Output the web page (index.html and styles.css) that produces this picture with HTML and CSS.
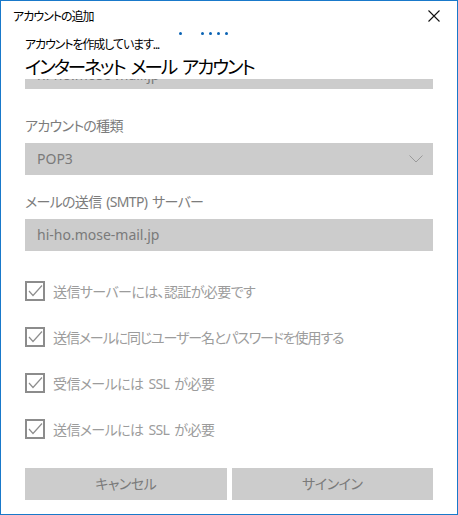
FILE: index.html
```html
<!DOCTYPE html>
<html lang="ja">
<head>
<meta charset="utf-8">
<link rel="stylesheet" href="styles.css">
</head>
<body>
<div class="window">
  <div class="titlebar">
    <span class="title">アカウントの追加</span>
    <svg class="close" width="12" height="12" viewBox="0 0 12 12"><path d="M0.5 0.5 L11.5 11.5 M11.5 0.5 L0.5 11.5" stroke="#111" stroke-width="1.1" fill="none"/></svg>
  </div>
  <div class="progress">
    <span class="dot d1"></span><span class="dot d2"></span><span class="dot d3"></span><span class="dot d3"></span><span class="dot d3"></span>
  </div>
  <div class="header">
    <div class="subtitle">アカウントを作成しています...</div>
    <div class="heading">インターネット メール アカウント</div>
  </div>
  <div class="scroll">
    <div class="scroll-inner">
      <div class="field first">hi-ho.mose-mail.jp</div>
      <div class="label l1">アカウントの種類</div>
      <div class="field select">POP3
        <svg class="chev" width="14" height="8" viewBox="0 0 14 8"><path d="M0.5 0.5 L7 7 L13.5 0.5" stroke="#9a9a9a" stroke-width="1" fill="none"/></svg>
      </div>
      <div class="label l2">メールの送信 (SMTP) サーバー</div>
      <div class="field">hi-ho.mose-mail.jp</div>
      <div class="checks">
        <div class="check"><span class="box"><svg width="16" height="16" viewBox="0 0 16 16"><path d="M2 8 L6 12.5 L15 2.5" stroke="#8e8e8e" stroke-width="1.2" fill="none"/></svg></span><span>送信サーバーには、認証が必要です</span></div>
        <div class="check tight"><span class="box"><svg width="16" height="16" viewBox="0 0 16 16"><path d="M2 8 L6 12.5 L15 2.5" stroke="#8e8e8e" stroke-width="1.2" fill="none"/></svg></span><span>送信メールに同じユーザー名とパスワードを使用する</span></div>
        <div class="check"><span class="box"><svg width="16" height="16" viewBox="0 0 16 16"><path d="M2 8 L6 12.5 L15 2.5" stroke="#8e8e8e" stroke-width="1.2" fill="none"/></svg></span><span>受信メールには SSL が必要</span></div>
        <div class="check"><span class="box"><svg width="16" height="16" viewBox="0 0 16 16"><path d="M2 8 L6 12.5 L15 2.5" stroke="#8e8e8e" stroke-width="1.2" fill="none"/></svg></span><span>送信メールには SSL が必要</span></div>
      </div>
    </div>
  </div>
  <div class="footer">
    <div class="btn">キャンセル</div>
    <div class="btn">サインイン</div>
  </div>
</div>
</body>
</html>
```
FILE: styles.css
```css
html, body {
  margin: 0;
  padding: 0;
  background: #ffffff;
}
body {
  font-family: "Noto Sans", "Noto Sans CJK JP", sans-serif;
  font-feature-settings: "palt";
}
.window {
  width: 458px;
  height: 515px;
  box-sizing: border-box;
  border: 1px solid #1979ca;
  display: flex;
  flex-direction: column;
  background: #fff;
}
.titlebar {
  height: 29px;
  display: flex;
  align-items: center;
  justify-content: space-between;
  padding: 0 17px 0 12px;
}
.title {
  font-size: 12px;
  letter-spacing: -1px;
  color: #000;
}
.close {
  display: block;
  margin-top: 1px;
}
.progress {
  height: 7px;
  display: flex;
  align-items: flex-start;
  padding-left: 178px;
}
.dot {
  width: 3px;
  height: 3px;
  border-radius: 50%;
  background: #0a63b4;
  margin-top: 2px;
}
.d2 { margin-left: 19px; }
.d3 { margin-left: 5px; }
.header {
  padding-left: 24px;
}
.subtitle {
  font-size: 12px;
  line-height: 16px;
  height: 18px;
  letter-spacing: -1.1px;
  color: #000;
}
.heading {
  font-size: 18.5px;
  line-height: 24px;
  color: #000;
  letter-spacing: -2px;
  word-spacing: 3px;
}
.scroll {
  flex: 1;
  overflow: hidden;
  padding: 0 24px;
}
.scroll-inner {
  margin-top: -22px;
}
.field {
  height: 32px;
  background: #cccccc;
  color: #7a7a7a;
  font-size: 14px;
  line-height: 32px;
  padding-left: 12px;
  display: flex;
  align-items: center;
  justify-content: space-between;
}
.field.first {
  padding-top: 3px;
  box-sizing: border-box;
}
.select .chev {
  margin-right: 10px;
}
.label {
  font-size: 14px;
  line-height: 20px;
  letter-spacing: -0.7px;
  word-spacing: 2px;
  color: #7c7c7c;
  margin-bottom: 7px;
}
.l1 { margin-top: 27px; }
.l2 { margin-top: 17px; }
.checks {
  margin-top: 30px;
  display: flex;
  flex-direction: column;
  gap: 26px;
}
.check {
  display: flex;
  align-items: center;
  height: 20px;
  font-size: 14px;
  letter-spacing: -0.6px;
  word-spacing: 2px;
  color: #9c9c9c;
}
.check.tight {
  letter-spacing: -1.1px;
}
.box {
  width: 20px;
  height: 20px;
  box-sizing: border-box;
  border: 2px solid #8c8c8c;
  display: flex;
  align-items: center;
  justify-content: center;
  margin-right: 8px;
  letter-spacing: 0;
  flex: none;
}
.box svg { display: block; }
.footer {
  display: flex;
  gap: 5px;
  padding: 0 24px 14px;
}
.btn {
  flex: 1;
  height: 32px;
  background: #cccccc;
  color: #7a7a7a;
  font-size: 14px;
  line-height: 32px;
  letter-spacing: -0.5px;
  text-align: center;
}
```
